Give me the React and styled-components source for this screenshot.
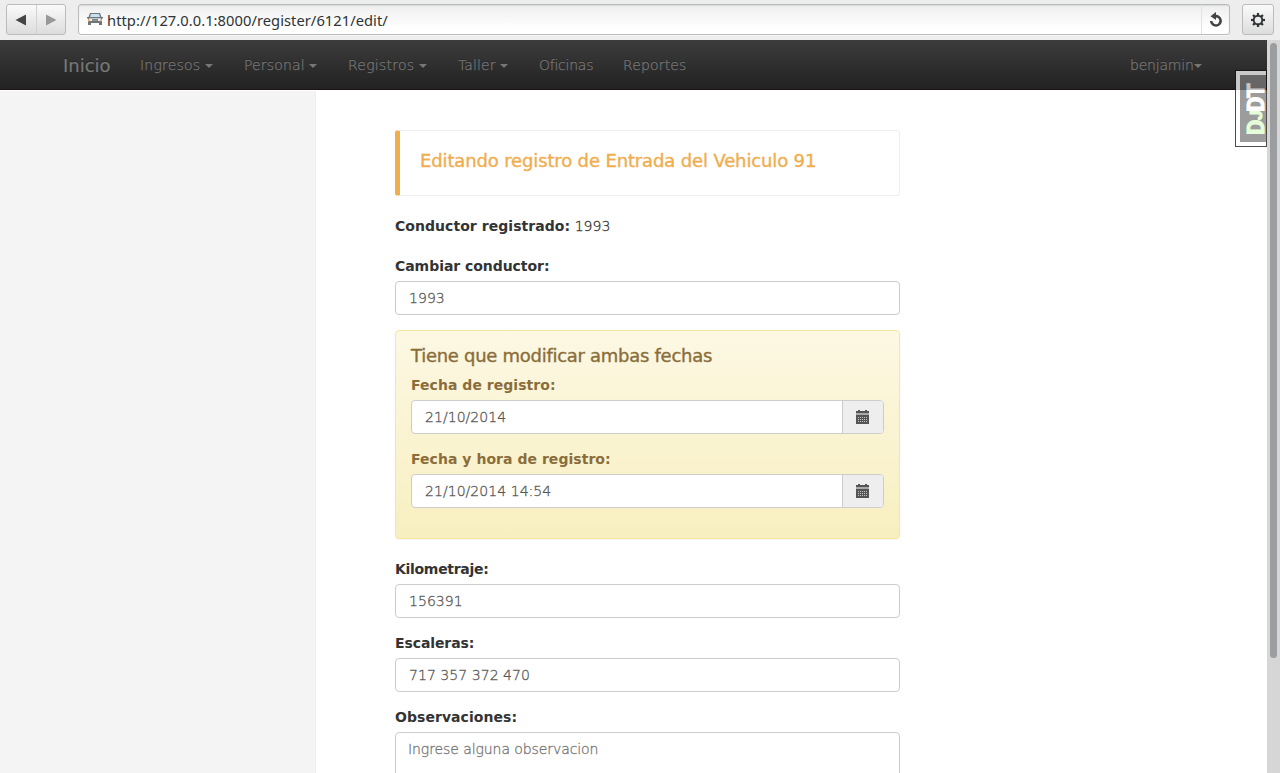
import React from 'react';
import styled, { createGlobalStyle } from 'styled-components';

const GlobalStyle = createGlobalStyle`
  *, *::before, *::after { box-sizing: border-box; }
  body {
    margin: 0;
    background: #fff;
    color: #333;
    font: 14px/20px "DejaVu Sans", Verdana, sans-serif;
    overflow: hidden;
  }
`;

const Window = styled.div`
  display: flex;
  flex-direction: column;
  height: 100vh;
  overflow: hidden;
`;

const Toolbar = styled.header`
  flex: none;
  display: flex;
  gap: 12px;
  height: 40px;
  padding: 4px 6px 5px;
  background: #ededed;
`;

const ButtonGroup = styled.div`
  display: flex;
  width: ${(p) => p.$width}px;
  border: 1px solid #b9bcba;
  border-radius: 3px;
  background: linear-gradient(#fafafa, #dcdcdc);
`;

const ToolButton = styled.button`
  flex: 1;
  display: flex;
  align-items: center;
  justify-content: center;
  padding: 0;
  border: 0;
  background: none;
  & + & { border-left: 1px solid #d2d2d2; }
`;

const AddressBar = styled.div`
  flex: 1;
  display: flex;
  align-items: stretch;
  border: 1px solid #b9bcba;
  border-radius: 3px;
  background: linear-gradient(#eee, #fff 80%);
  box-shadow: inset 0 1px 1px #d8dad9, 0 1px 0 #f8f8f8;
`;

const Favicon = styled.svg`
  align-self: center;
  margin: 0 4px 1px 8px;
`;

const Url = styled.span`
  flex: 1;
  font: 14.7px/30px "Noto Sans", sans-serif;
  letter-spacing: 0.05px;
  color: #2e3436;
`;

const Reload = styled(ToolButton)`
  flex: none;
  width: 28px;
  border-left: 1px solid #e2e2e2;
`;

const Viewport = styled.div`
  position: relative;
  flex: 1;
  min-height: 0;
  display: flex;
`;

const Page = styled.div`
  flex: 1;
  display: flex;
  flex-direction: column;
  min-width: 0;
`;

const Navbar = styled.nav`
  flex: none;
  display: flex;
  height: 50px;
  margin-bottom: 1px;
  padding: 0 49px 0 48px;
  border-bottom: 1px solid #1a141a;
  background: linear-gradient(#3c3c3c, #222);
  color: #777;
  text-shadow: 0 -1px 0 rgba(0, 0, 0, 0.25);
`;

const Brand = styled.a`
  width: 77px;
  padding: 16px 0 0 15px;
  font-size: 18px;
  white-space: nowrap;
  -webkit-text-stroke: 0.2px;
`;

const NavItem = styled.a`
  display: flex;
  align-items: center;
  justify-content: space-between;
  width: ${(p) => p.$width}px;
  height: 50px;
  padding: 0 16px 1px 15px;
  font-weight: 200;
  letter-spacing: ${(p) => p.$spacing}px;
  white-space: nowrap;
  -webkit-text-stroke: 0.25px;
  margin-left: ${(p) => (p.$right ? 'auto' : 0)};
`;

const Caret = styled.span`
  margin-top: 3px;
  border: 4px solid transparent;
  border-top-color: #777;
  border-bottom: 0;
`;

const Body = styled.div`
  flex: 1;
  display: flex;
  min-height: 0;
`;

const Sidebar = styled.aside`
  flex: none;
  width: 316px;
  border-right: 1px solid #eee;
  background: #f4f4f4;
`;

const Main = styled.main`
  width: 584px;
  padding: 39px 0 0 79px;
`;

const Callout = styled.div`
  height: 66px;
  margin-bottom: 20px;
  padding: 20px;
  border: 1px solid #eee;
  border-left: 5px solid #f0ad4e;
  border-radius: 3px;
`;

const Heading = styled.h4`
  margin: 0 0 9px;
  font-size: 18px;
  line-height: 20px;
  font-weight: 500;
  letter-spacing: ${(p) => p.$spacing}px;
  color: ${(p) => p.$color};
  white-space: nowrap;
  -webkit-text-stroke: 0.35px;
`;

const Line = styled.p`
  margin: 0 0 20px;
  letter-spacing: 0.05px;
`;

const Light = styled.span`
  font-weight: 200;
  -webkit-text-stroke: 0.3px;
`;

const Field = styled.div`
  margin-bottom: 15px;
`;

const Label = styled.label`
  display: block;
  margin-bottom: 5px;
  font-weight: 700;
  letter-spacing: ${(p) => p.$spacing || 0}px;
`;

const InputRow = styled.div`
  display: flex;
  height: ${(p) => p.$height || 34}px;
  border: 1px solid #ccc;
  border-radius: 4px;
  background: #fff;
  overflow: hidden;
`;

const Input = styled.input`
  flex: 1;
  min-width: 0;
  padding: 0 13px;
  border: 0;
  outline: 0;
  background: none;
  color: #555;
  font: inherit;
  font-weight: 200;
  letter-spacing: 0.05px;
  -webkit-text-stroke: 0.3px;
`;

const TextArea = styled.textarea`
  flex: 1;
  padding: 6px 12px;
  border: 0;
  outline: 0;
  resize: none;
  background: none;
  font: inherit;
  font-weight: 200;
  letter-spacing: -0.08px;
  -webkit-text-stroke: 0.3px;
  &::placeholder { color: #777; opacity: 1; }
`;

const AddOn = styled.span`
  display: flex;
  align-items: center;
  justify-content: center;
  width: 41px;
  padding-right: 2px;
  border-left: 1px solid #ccc;
  background: #eee;
`;

const Warning = styled.section`
  height: 209px;
  margin-bottom: 20px;
  padding: 15px;
  border: 1px solid #f5e79e;
  border-radius: 4px;
  background: linear-gradient(#fcf8e3, #f8efc0);
  color: #8a6d3b;
  box-shadow: 0 1px 2px rgba(0, 0, 0, 0.05);
`;

const ScrollTrack = styled.div`
  flex: none;
  width: 13px;
  padding: 3px 3px 0;
  background: #d6d6d6;
`;

const ScrollThumb = styled.div`
  width: 7px;
  height: 615px;
  border-radius: 4px;
  background: #9c9d9f;
`;

const DebugHandle = styled.div`
  position: absolute;
  top: 30px;
  right: 13px;
  width: 32px;
  height: 77px;
  padding: 4px 0 4px 4px;
  border: 1px solid #111;
  background: #fff;
  opacity: 0.75;
`;

const DebugLabel = styled.div`
  display: flex;
  align-items: baseline;
  width: 26px;
  height: 67px;
  padding: 7px 6px 0 0;
  background: #7c7c7c;
  color: #fff;
  font: 700 24px/20px Roboto, sans-serif;
  letter-spacing: -1px;
  -webkit-text-stroke: 1px;
  writing-mode: vertical-rl;
  transform: rotate(180deg);
`;

const Green = styled.span`
  color: #dfc;
`;

const SmallJ = styled(Green)`
  font-size: 17px;
`;

const CalendarIcon = () => (
  <svg width="13" height="14" viewBox="0 0 13 14" shapeRendering="crispEdges">
    <path fill="#555" d="M2 0h2v1h5V0h2v1h2v2H0V1h2z" />
    <path fill="#aaa" d="M0 3h13v2H0z" />
    <path fill="#555" d="M0 5h13v9H0z" />
    <path
      stroke="#c4c4c4"
      strokeDasharray="1 1"
      d="M2 7.5h10M2 9.5h10M2 11.5h10"
    />
  </svg>
);

const CarIcon = () => (
  <Favicon width="16" height="13" viewBox="0 0 16 13">
    <path fill="#70757a" d="M3 0h10l1.500 4H16v1.500h-1V12h-3v-2H4v2H1V5.500H0V4h1.500z" />
    <path fill="#c9e2f0" d="M4 1h8l1 3H3z" />
    <path fill="#c4c8cb" d="M2 5h12v1H2z" />
    <path fill="#f3a94a" d="M1 6h1.500v2.500H1zM13.500 6H15v2.500h-1.500z" />
    <path fill="#eef1f3" d="M2.500 6H5v2H2.500zM11 6h2.500v2H11z" />
    <path fill="#8f969c" d="M5.500 6.500h5V8h-5z" />
  </Favicon>
);

const GearIcon = () => (
  <svg width="16" height="16" viewBox="-8 -8 16 16">
    <circle r="4.300" fill="none" stroke="#2e3436" strokeWidth="1.900" />
    <g fill="#2e3436">
      {[0, 45, 90, 135, 180, 225, 270, 315].map((a) => (
        <rect key={a} x="-1.100" y="-7" width="2.200" height="2.600" transform={`rotate(${a})`} />
      ))}
    </g>
  </svg>
);

const menu = [
  { name: 'Ingresos', width: 104, spacing: 0.2, dropdown: true },
  { name: 'Personal', width: 104, spacing: 0.15, dropdown: true },
  { name: 'Registros', width: 110, spacing: 0.25, dropdown: true },
  { name: 'Taller', width: 81, spacing: 0.1, dropdown: true },
  { name: 'Oficinas', width: 84, spacing: -0.25 },
  { name: 'Reportes', width: 95, spacing: 0.15 },
];

function TextField({ label, value, calendar, spacing }) {
  return (
    <Field>
      <Label $spacing={spacing}>{label}</Label>
      <InputRow>
        <Input defaultValue={value} />
        {calendar && <AddOn><CalendarIcon /></AddOn>}
      </InputRow>
    </Field>
  );
}

export default function App() {
  return (
    <Window>
      <GlobalStyle />
      <Toolbar>
        <ButtonGroup $width={60}>
          <ToolButton aria-label="Atrás">
            <svg width="12" height="12"><path d="M11 0.500v11L0.500 6z" fill="#444" /></svg>
          </ToolButton>
          <ToolButton aria-label="Adelante">
            <svg width="12" height="12"><path d="M1 0.500v11L11.500 6z" fill="#999" /></svg>
          </ToolButton>
        </ButtonGroup>
        <AddressBar>
          <CarIcon />
          <Url>http://127.0.0.1:8000/register/6121/edit/</Url>
          <Reload aria-label="Recargar">
            <svg width="14" height="15" viewBox="0 0 14 15">
              <path d="M6 4.200A4.700 4.700 0 1 1 2.200 9" fill="none" stroke="#444" strokeWidth="2.600" />
              <path d="M1.500 4.300L7 0v8z" fill="#444" />
            </svg>
          </Reload>
        </AddressBar>
        <ButtonGroup $width={32}>
          <ToolButton aria-label="Menú"><GearIcon /></ToolButton>
        </ButtonGroup>
      </Toolbar>
      <Viewport>
        <Page>
          <Navbar>
            <Brand>Inicio</Brand>
            {menu.map(({ name, width, spacing, dropdown }) => (
              <NavItem key={name} $width={width} $spacing={spacing}>
                {name}
                {dropdown && <Caret />}
              </NavItem>
            ))}
            <NavItem $right $width={103} $spacing={-0.2}>benjamin<Caret /></NavItem>
          </Navbar>
          <Body>
            <Sidebar />
            <Main>
              <Callout>
                <Heading $color="#f0ad4e" $spacing={-0.14}>Editando registro de Entrada del Vehiculo 91</Heading>
              </Callout>
              <Line><b>Conductor registrado:</b> <Light>1993</Light></Line>
              <TextField label="Cambiar conductor:" value="1993" spacing={-0.05} />
              <Warning>
                <Heading $color="#8a6d3b" $spacing={-0.28}>Tiene que modificar ambas fechas</Heading>
                <TextField label="Fecha de registro:" value="21/10/2014" calendar spacing={0.04} />
                <TextField label="Fecha y hora de registro:" value="21/10/2014 14:54" calendar spacing={0.04} />
              </Warning>
              <TextField label="Kilometraje:" value="156391" spacing={-0.3} />
              <TextField label="Escaleras:" value="717 357 372 470" spacing={-0.1} />
              <Field>
                <Label $spacing={0.05}>Observaciones:</Label>
                <InputRow $height={74}>
                  <TextArea placeholder="Ingrese alguna observacion" />
                </InputRow>
              </Field>
            </Main>
          </Body>
        </Page>
        <ScrollTrack><ScrollThumb /></ScrollTrack>
        <DebugHandle>
          <DebugLabel><Green>D</Green><SmallJ>J</SmallJ>DT</DebugLabel>
        </DebugHandle>
      </Viewport>
    </Window>
  );
}
